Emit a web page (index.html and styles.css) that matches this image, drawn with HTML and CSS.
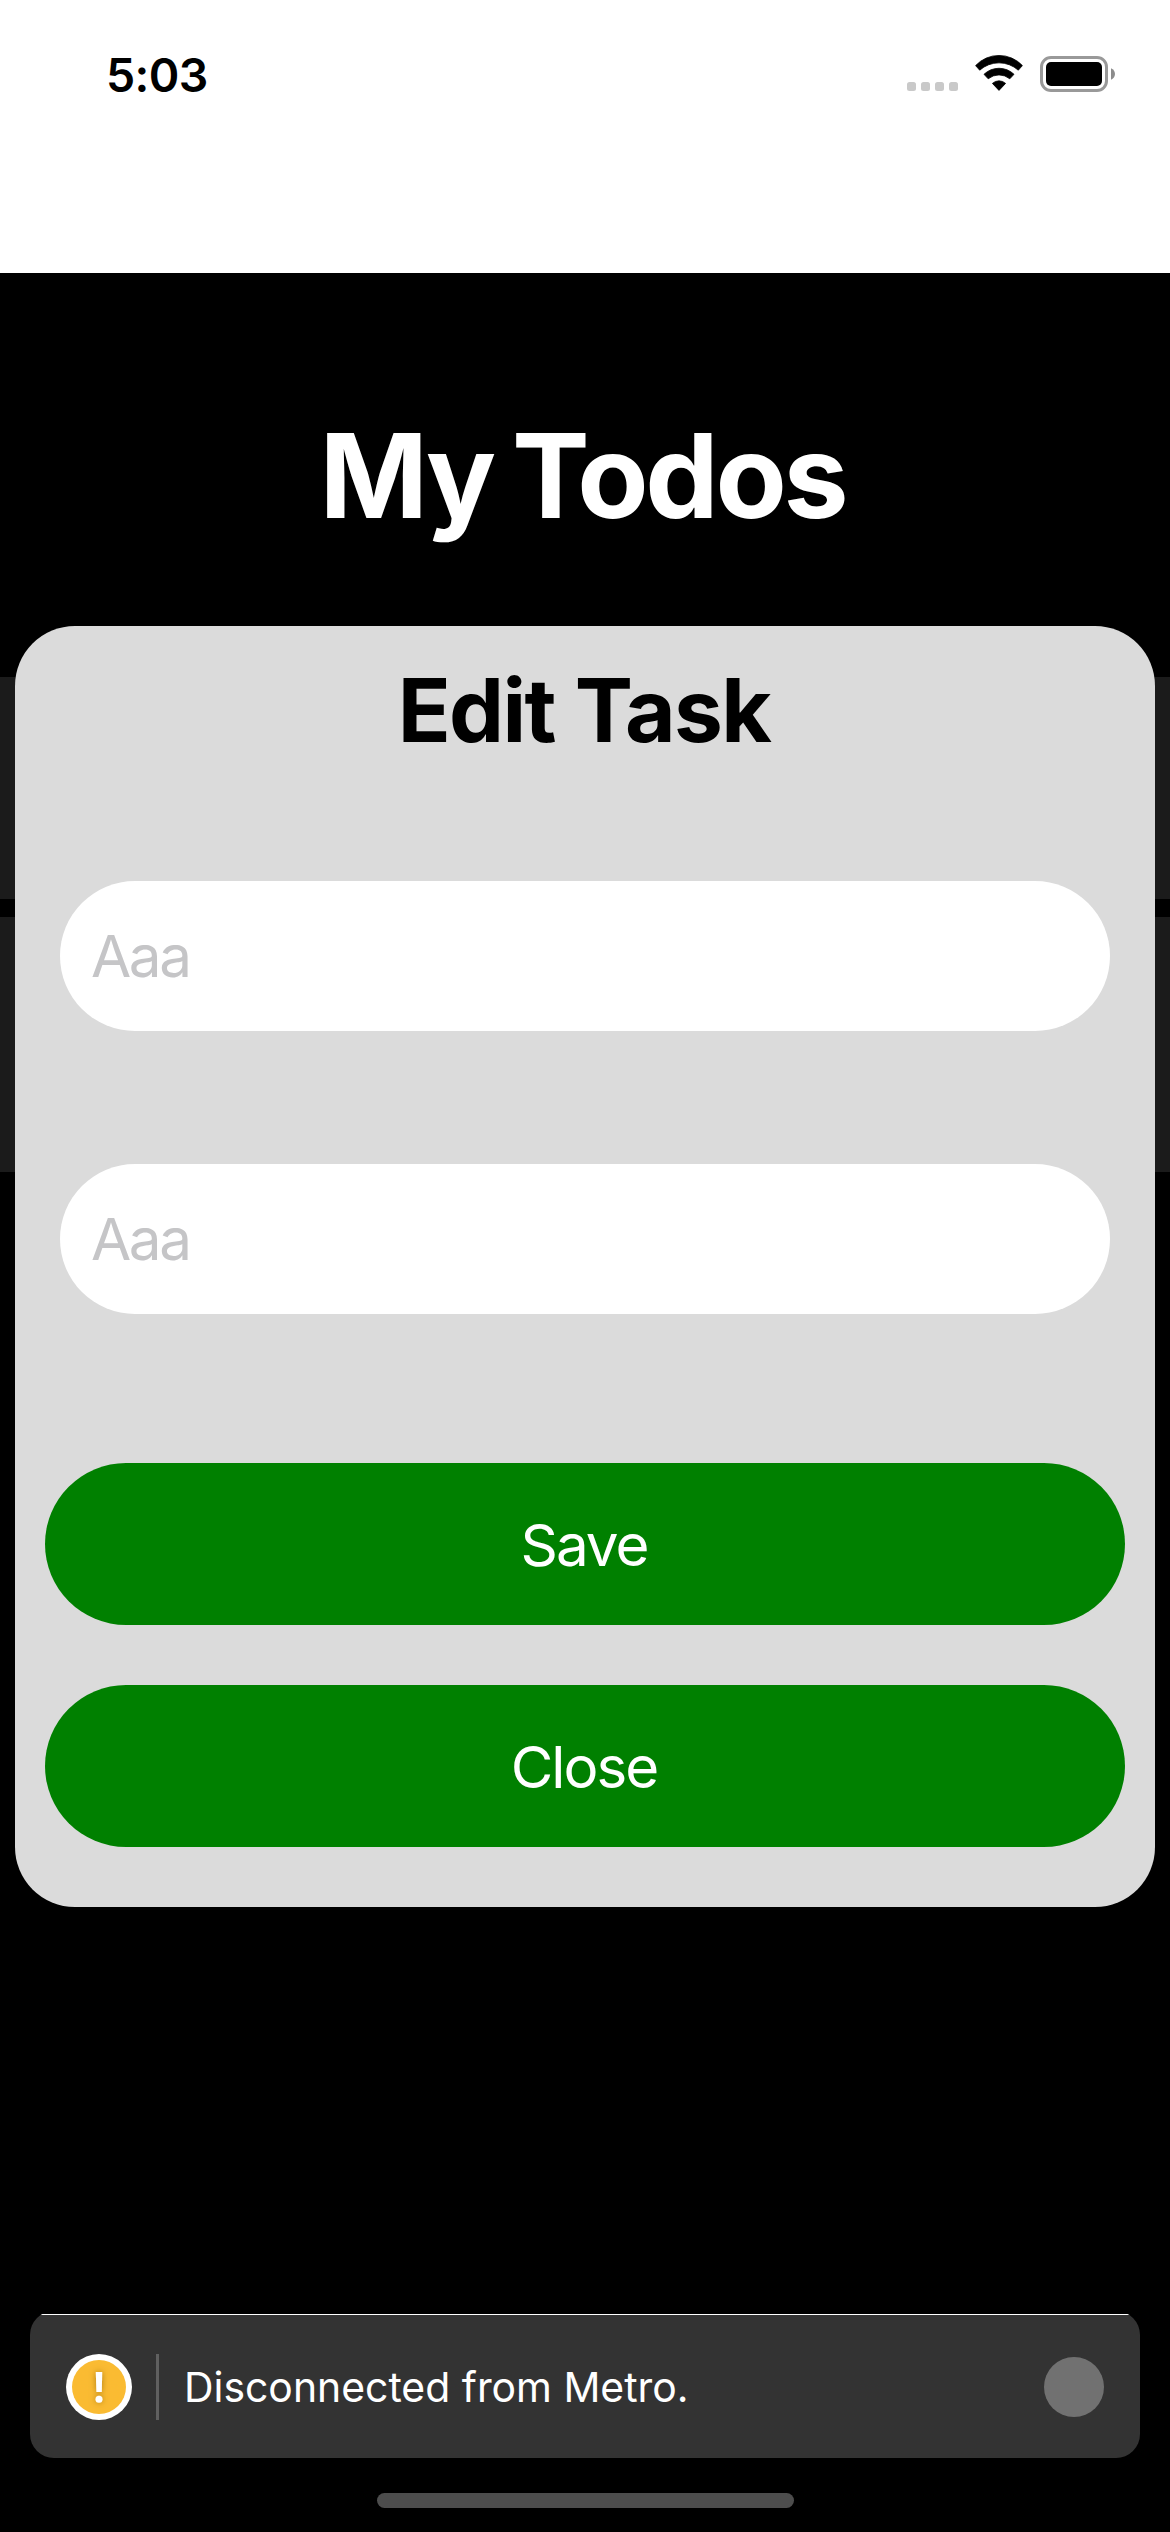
FILE: index.html
```html
<!DOCTYPE html>
<html lang="en">
<head>
  <meta charset="utf-8">
  <title>My Todos</title>
  <link rel="stylesheet" href="styles.css">
</head>
<body>
  <div class="screen">
    <header class="status-bar">
      <span class="time">5:03</span>
      <div class="indicators">
        <svg class="cellular" width="51" height="9" viewBox="0 0 51 9" fill="#c9c9c9">
          <rect width="9" height="9" rx="2.5"/>
          <rect x="14" width="9" height="9" rx="2.5"/>
          <rect x="28" width="9" height="9" rx="2.5"/>
          <rect x="42" width="9" height="9" rx="2.5"/>
        </svg>
        <svg class="wifi" width="48" height="36" viewBox="0 0 48 36" stroke="#000" stroke-width="0.8" stroke-linejoin="round">
          <path d="M0.6 10.6A32 32 0 0 1 47.4 10.6L43.3 15.2A29 29 0 0 0 4.7 15.2Z"/>
          <path d="M9 19.3A21.7 21.7 0 0 1 39 19.3L34.8 23.8A17 17 0 0 0 13.2 23.8Z"/>
          <path d="M17.4 28.4A9.8 9.8 0 0 1 30.6 28.4L24 35.4Z"/>
        </svg>
        <svg class="battery" width="75" height="36" viewBox="0 0 75 36">
          <rect x="1.5" y="1.5" width="65" height="33" rx="9.5" fill="none" stroke="#999" stroke-width="3"/>
          <rect x="6" y="6" width="56" height="24" rx="5"/>
          <path d="M71 12.2C73.4 13.2 75 15.4 75 18S73.4 22.8 71 23.8Z" fill="#8c8c8c"/>
        </svg>
      </div>
    </header>

    <main class="todos">
      <h1 class="title">My Todos</h1>
      <ul class="list">
        <li class="row"></li>
        <li class="row row-tall"></li>
      </ul>
    </main>

    <div class="overlay">
      <form class="sheet">
        <h2 class="sheet-title">Edit Task</h2>
        <div class="fields">
          <input class="field" type="text" placeholder="Aaa">
          <input class="field" type="text" placeholder="Aaa">
        </div>
        <div class="actions">
          <button class="button" type="button">Save</button>
          <button class="button" type="button">Close</button>
        </div>
      </form>
    </div>

    <footer class="bottom">
      <div class="toast">
        <svg class="warning" width="66" height="66" viewBox="0 0 66 66">
          <defs>
            <filter id="glow" x="-300%" y="-60%" width="700%" height="220%">
              <feDropShadow dx="0" dy="0" stdDeviation="3" flood-color="#7a5200" flood-opacity="0.6"/>
            </filter>
          </defs>
          <circle cx="33" cy="33" r="33" fill="#fff"/>
          <circle cx="33" cy="33" r="27" fill="#fabb32"/>
          <g fill="#fff" filter="url(#glow)">
            <path d="M29.8 18H36.2L35.8 38H30.4Z"/>
            <circle cx="33" cy="45.2" r="3.5"/>
          </g>
        </svg>
        <span class="divider"></span>
        <span class="message">Disconnected from Metro.</span>
        <span class="dismiss"></span>
      </div>
      <div class="home-indicator"></div>
    </footer>
  </div>
</body>
</html>
```
FILE: styles.css
```css
* {
  box-sizing: border-box;
}

body {
  margin: 0;
  background: #000;
  font-family: Inter, "Liberation Sans", sans-serif;
}

.screen {
  position: relative;
  display: flex;
  flex-direction: column;
  width: 1170px;
  height: 2532px;
  overflow: hidden;
  background: #000;
}

.status-bar {
  display: flex;
  justify-content: space-between;
  align-items: flex-start;
  height: 273px;
  padding: 45px 55px 0 106px;
  background: #fff;
}

.time {
  font-size: 46.4px;
  font-weight: 600;
  line-height: 60px;
  letter-spacing: -0.6px;
}

.indicators {
  display: flex;
  align-items: flex-end;
  padding-top: 10px;
}

.wifi {
  margin-left: 17px;
}

.battery {
  margin: 0 0 -1px 17px;
}

.todos {
  flex: 1;
  padding-top: 131px;
}

.title {
  margin: 0 0 129px;
  color: #fff;
  font-size: 116.4px;
  font-weight: 700;
  line-height: 144px;
  letter-spacing: -3.3px;
  word-spacing: -5px;
  text-align: center;
  text-indent: -5px;
}

.list {
  display: flex;
  flex-direction: column;
  gap: 18px;
  margin: 0;
  padding: 0;
  list-style: none;
}

.row {
  height: 222px;
  background: #1b1b1b;
}

.row-tall {
  height: 255px;
}

.overlay {
  position: absolute;
  inset: 0;
  padding: 626px 15px 0;
}

.sheet {
  padding-bottom: 60px;
  border-radius: 60px;
  background: #dbdbdb;
}

.sheet-title {
  margin: 0 0 87px;
  font-size: 87.3px;
  font-weight: 700;
  line-height: 168px;
  letter-spacing: -1.66px;
  word-spacing: 1px;
  text-align: center;
  text-indent: -2px;
}

.fields {
  display: flex;
  flex-direction: column;
  gap: 133px;
  padding: 0 45px;
}

.field {
  width: 100%;
  height: 150px;
  padding: 0 31px;
  border: 0;
  border-radius: 75px;
  background: #fff;
  font-family: inherit;
  font-size: 58.3px;
  letter-spacing: -2.4px;
}

.field::placeholder {
  color: #c5c5c7;
  opacity: 1;
}

.actions {
  display: flex;
  flex-direction: column;
  gap: 60px;
  margin-top: 149px;
  padding: 0 30px;
}

.button {
  height: 162px;
  padding: 2px 2px 0 0;
  border: 0;
  border-radius: 81px;
  background: #008000;
  color: #fff;
  font-family: inherit;
  font-size: 58.3px;
  letter-spacing: -2px;
}

.bottom {
  display: flex;
  flex-direction: column;
  align-items: center;
  gap: 35px;
  padding: 0 30px 24px;
}

/* The top hairline is part of the background so the rounded corners clip it. */
.toast {
  display: flex;
  align-items: center;
  width: 100%;
  height: 147px;
  padding: 5px 36px 0;
  border-radius: 24px;
  background: linear-gradient(transparent 3px, #fff 3px, #fff 4px, #333 4px);
}

.divider {
  width: 3px;
  height: 66px;
  margin: 0 25px 0 24px;
  background: #606060;
}

.message {
  flex: 1;
  color: #fff;
  font-size: 40.9px;
  line-height: 60px;
}

.dismiss {
  width: 60px;
  height: 60px;
  border-radius: 50%;
  background: #717171;
}

.home-indicator {
  width: 417px;
  height: 15px;
  border-radius: 8px;
  background: #4d4d4d;
}
```
